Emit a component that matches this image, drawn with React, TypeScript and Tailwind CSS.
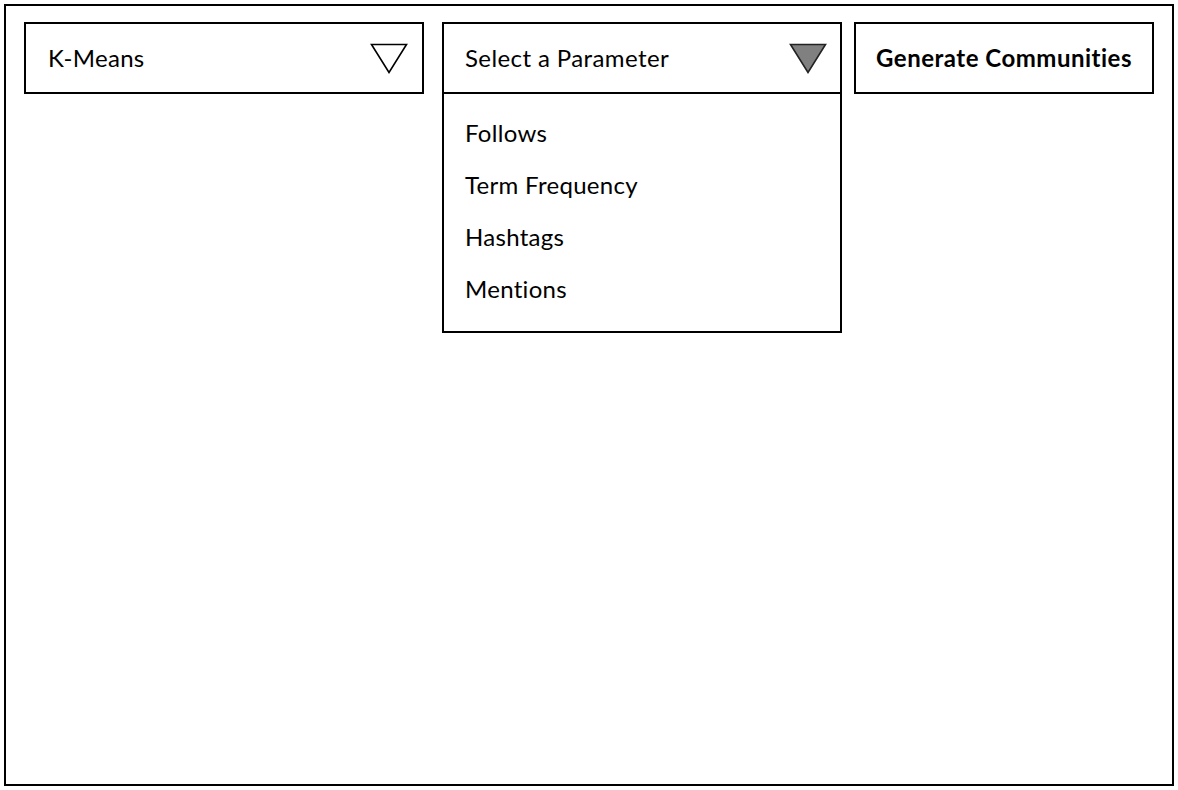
import React from 'react'

const font = { fontFamily: 'Lato, "Noto Sans", sans-serif' }

const Triangle: React.FC<{ filled?: boolean }> = ({ filled }) => (
  <svg width="38" height="31" viewBox="0 0 38 31" className="block">
    <polygon
      points="1.5,1.5 36.5,1.5 19,29.5"
      fill={filled ? '#808080' : 'none'}
      stroke={filled ? '#222' : '#000'}
      strokeWidth="1.6"
      strokeLinejoin="miter"
    />
  </svg>
)

const App: React.FC = () => {
  const params = ['Follows', 'Term Frequency', 'Hashtags', 'Mentions']

  return (
    <div className="w-[1178px] h-[790px] bg-white p-[4px]" style={font}>
      <div className="w-[1170px] h-[782px] border-2 border-black px-[18px] pt-[16px]">
        <div className="flex items-start">
          {/* Algorithm select */}
          <div className="w-[400px] h-[72px] border-2 border-black flex items-center justify-between pl-[22px] pr-[14px]">
            <span className="text-[24px] tracking-[0.3px] text-black">K-Means</span>
            <Triangle />
          </div>

          {/* Parameter select (open) */}
          <div className="ml-[18px] w-[400px] border-2 border-black">
            <div className="h-[70px] border-b-2 border-black flex items-center justify-between pl-[21px] pr-[13px]">
              <span className="text-[24px] tracking-[0.4px] text-black">Select a Parameter</span>
              <Triangle filled />
            </div>
            <ul className="pl-[21px] pt-[23px] pb-[26px] flex flex-col gap-[20px]">
              {params.map((p) => (
                <li key={p} className="text-[24px] tracking-[0.3px] leading-[32px] text-black">
                  {p}
                </li>
              ))}
            </ul>
          </div>

          {/* Action button */}
          <button className="ml-[12px] w-[300px] h-[72px] border-2 border-black flex items-center justify-center">
            <span className="text-[24px] tracking-[0.5px] font-bold text-black">Generate Communities</span>
          </button>
        </div>
      </div>
    </div>
  )
}

export default App
